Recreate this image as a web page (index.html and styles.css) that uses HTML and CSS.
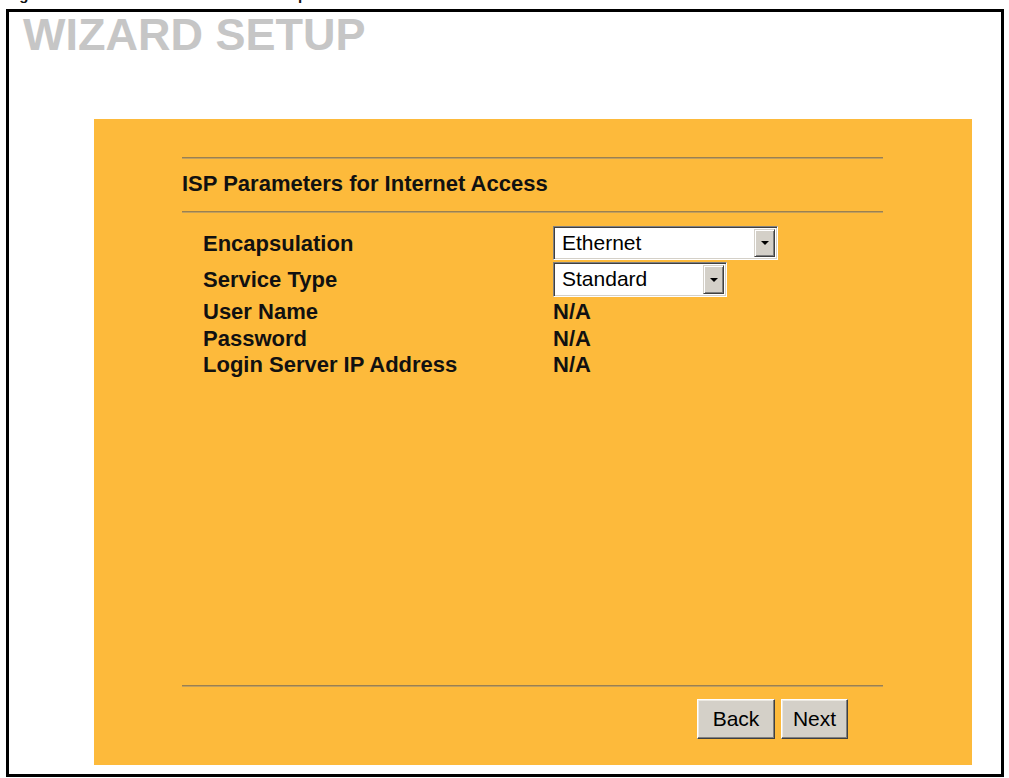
FILE: index.html
```html
<!DOCTYPE html>
<html>
<head>
<meta charset="utf-8">
<title>Wizard Setup</title>
<link rel="stylesheet" href="styles.css">
</head>
<body>
<div class="caption"><span>Figure 24 Internet Access: Ethernet Encapsulation</span></div>
<div class="frame">
  <h1 class="title">WIZARD SETUP</h1>
  <div class="panel">
    <hr class="rule">
    <h2 class="heading">ISP Parameters for Internet Access</h2>
    <hr class="rule">
    <div class="fields">
      <div class="row row-first">
        <div class="label label-pad">Encapsulation</div>
        <div class="value">
          <div class="select select-wide"><span class="select-text">Ethernet</span><span class="select-btn"><span class="arrow"></span></span></div>
        </div>
      </div>
      <div class="row row-second">
        <div class="label label-pad">Service Type</div>
        <div class="value">
          <div class="select select-narrow"><span class="select-text">Standard</span><span class="select-btn"><span class="arrow"></span></span></div>
        </div>
      </div>
      <div class="row row-text row-user">
        <div class="label">User Name</div>
        <div class="value text-value">N/A</div>
      </div>
      <div class="row row-text">
        <div class="label">Password</div>
        <div class="value text-value">N/A</div>
      </div>
      <div class="row row-text">
        <div class="label">Login Server IP Address</div>
        <div class="value text-value">N/A</div>
      </div>
    </div>
    <div class="spacer"></div>
    <hr class="rule">
    <div class="actions">
      <button class="btn btn-back">Back</button>
      <button class="btn btn-next">Next</button>
    </div>
  </div>
</div>
</body>
</html>
```
FILE: styles.css
```css
body {
  margin: 0;
  background: #ffffff;
  font-family: "Liberation Sans", Arial, sans-serif;
  color: #111111;
}

.caption {
  height: 9px;
  overflow: hidden;
  padding-left: 6px;
  font-size: 15px;
  font-weight: bold;
  line-height: 15px;
  white-space: nowrap;
}

.caption span {
  display: block;
  margin-top: -13px;
}

.frame {
  margin-left: 6px;
  width: 998px;
  height: 768px;
  box-sizing: border-box;
  border: 3px solid #000000;
}

.title {
  margin: 0;
  padding-left: 14px;
  font-size: 45px;
  line-height: 45px;
  font-weight: bold;
  color: #c6c6c6;
}

.panel {
  margin: 62px 0 0 85px;
  width: 878px;
  height: 646px;
  box-sizing: border-box;
  background: #fdba3b;
  padding: 38px 89px 26px 88px;
  display: flex;
  flex-direction: column;
}

.rule {
  margin: 0;
  border: 0;
  height: 0;
  border-top: 1px solid #9a8050;
  border-bottom: 1px solid #c29f5c;
}

.heading {
  margin: 12px 0 14px;
  font-size: 22px;
  line-height: 26px;
  font-weight: bold;
}

.fields {
  margin-top: 13px;
  padding-left: 21px;
  display: flex;
  flex-direction: column;
}

.row {
  display: grid;
  grid-template-columns: 350px 1fr;
  align-items: start;
}

.row-first {
  height: 36px;
}

.row-second {
  height: 37px;
}

.row-text {
  height: 26px;
}

.row-user {
  height: 27px;
}

.label,
.text-value {
  font-size: 22px;
  line-height: 26px;
  font-weight: bold;
}

.label-pad {
  padding-top: 5px;
}

.select {
  display: flex;
  box-sizing: border-box;
  border: 1px solid;
  border-color: #808080 #ffffff #ffffff #808080;
  box-shadow: inset 1px 1px #404040, inset -1px -1px #d4d0c8;
  background: #ffffff;
  padding: 2px;
}

.select-wide {
  width: 225px;
  height: 34px;
}

.select-narrow {
  width: 174px;
  height: 35px;
}

.select-text {
  flex: 1;
  padding-left: 6px;
  font-size: 21px;
  line-height: 28px;
  color: #000000;
}

.select-btn {
  width: 21px;
  box-sizing: border-box;
  background: #d4d0c8;
  border: 1px solid;
  border-color: #d4d0c8 #404040 #404040 #d4d0c8;
  box-shadow: inset 1px 1px #ffffff, inset -1px -1px #808080;
  display: flex;
  align-items: center;
  justify-content: center;
}

.arrow {
  width: 0;
  height: 0;
  border-left: 4px solid transparent;
  border-right: 4px solid transparent;
  border-top: 4px solid #000000;
}

.spacer {
  flex: 1;
}

.actions {
  margin-top: 12px;
  display: flex;
  justify-content: flex-end;
  padding-right: 35px;
}

.btn {
  height: 40px;
  padding: 0;
  margin-left: 6px;
  font-family: "Liberation Sans", Arial, sans-serif;
  font-size: 21px;
  color: #000000;
  background: #d4d0c8;
  border: 1px solid;
  border-color: #ffffff #404040 #404040 #ffffff;
  box-shadow: inset -1px -1px #808080, inset 1px 1px #ece9e2;
}

.btn-back {
  width: 78px;
}

.btn-next {
  width: 67px;
}
```
